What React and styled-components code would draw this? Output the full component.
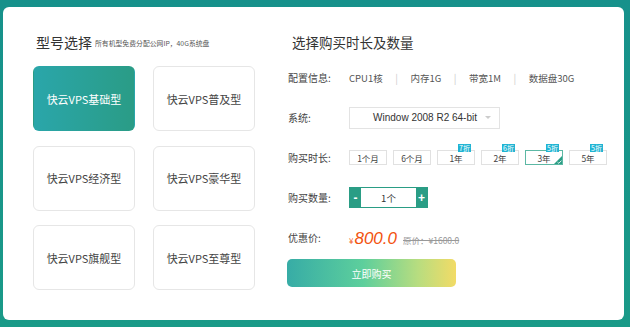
import React, { useState } from "react";
import styled, { createGlobalStyle, css } from "styled-components";

const Global = createGlobalStyle`
  html, body { margin: 0; padding: 0; }
  body {
    background: linear-gradient(180deg, #16918b 0%, #1a9a88 100%);
    font-family: "Noto Sans CJK SC", "Microsoft YaHei", sans-serif;
    width: 630px;
    height: 327px;
    overflow: hidden;
  }
`;

const Page = styled.div`
  padding: 7px 6px 7px 3px;
  box-sizing: border-box;
  height: 327px;
`;

const Card = styled.div`
  background: #fff;
  border-radius: 6px;
  height: 100%;
  box-sizing: border-box;
  padding: 25px 0 0 30px;
  display: flex;
  gap: 32px;
`;

const LeftCol = styled.div`
  width: 222px;
`;

const RightCol = styled.div`
  flex: 1;
`;

const TitleRow = styled.div`
  display: flex;
  align-items: center;
  height: 20px;
  gap: 3px;
  color: #333;
  padding-left: ${(p) => p.$indent || 3}px;
`;

const Title = styled.span`
  font-size: ${(p) => p.$size || 14}px;
  line-height: 20px;
`;

const Sub = styled.span`
  display: inline-block;
  font-size: 9px;
  color: #555;
  transform: scale(0.76);
  transform-origin: left center;
  white-space: nowrap;
  margin-top: 3px;
`;

const Grid = styled.div`
  margin-top: 14px;
  display: grid;
  grid-template-columns: 102px 102px;
  grid-auto-rows: 65px;
  column-gap: 18px;
  row-gap: 14.5px;
`;

const Model = styled.div`
  border: 1px solid #e6e6e6;
  border-radius: 6px;
  display: flex;
  align-items: center;
  justify-content: center;
  font-size: 11px;
  color: #444;
  ${(p) =>
    p.$active &&
    css`
      border-color: transparent;
      background: linear-gradient(90deg, #2aa6aa 0%, #2a9c86 100%);
      color: #fff;
    `}
`;

const Rows = styled.div`
  margin-top: 5.5px;
`;

const Row = styled.div`
  display: flex;
  align-items: center;
  height: 40px;
  font-size: 10px;
  color: #444;
`;

const Label = styled.div`
  width: 61px;
  flex: none;
  padding-left: 1px;
`;

const Spec = styled.span`
  color: #555;
  font-size: 9.5px;
`;

const Sep = styled.span`
  color: #ccc;
  margin: 0 12.5px;
  font-size: 10px;
`;

const Select = styled.div`
  width: 151px;
  height: 22px;
  box-sizing: border-box;
  border: 1px solid #e3e3e3;
  display: flex;
  align-items: center;
  justify-content: flex-end;
  padding-right: 8px;
  gap: 8px;
  font-family: "Liberation Sans", "Noto Sans CJK SC", sans-serif;
  font-size: 10px;
  color: #333;
`;

const Arrow = styled.span`
  width: 0;
  height: 0;
  border-left: 3.5px solid transparent;
  border-right: 3.5px solid transparent;
  border-top: 3.5px solid #ccc;
`;

const Terms = styled.div`
  display: flex;
  gap: 6px;
`;

const Term = styled.div`
  position: relative;
  width: 38px;
  height: 15px;
  box-sizing: border-box;
  border: 1px solid ${(p) => (p.$active ? "#5cb8a4" : "#e1e1e1")};
  display: flex;
  align-items: center;
  justify-content: center;
  font-size: 8.5px;
  color: #444;
  ${(p) =>
    p.$active &&
    css`
      &::after {
        content: "";
        position: absolute;
        right: 0;
        bottom: 0;
        width: 0;
        height: 0;
        border-left: 8px solid transparent;
        border-bottom: 8px solid #2a9d85;
      }
    `}
`;

const Check = styled.svg`
  position: absolute;
  right: 0;
  bottom: 0;
  z-index: 1;
`;

const Badge = styled.span`
  position: absolute;
  right: 3px;
  top: -7px;
  height: 8px;
  padding: 0 1px;
  background: #20b4d3;
  color: #fff;
  font-size: 7px;
  line-height: 8px;
  white-space: nowrap;
`;

const Stepper = styled.div`
  display: flex;
  height: 21px;
  width: 79px;
  box-sizing: border-box;
  border: 1px solid #2a9d85;
`;

const StepBtn = styled.div`
  width: 11px;
  background: #2a9d85;
  color: #fff;
  display: flex;
  align-items: center;
  justify-content: center;
  font-size: 12px;
  font-family: "Liberation Sans", sans-serif;
  font-weight: bold;
`;

const Qty = styled.div`
  flex: 1;
  display: flex;
  align-items: center;
  justify-content: center;
  font-size: 9.5px;
  color: #333;
`;

const PriceBox = styled.div`
  display: flex;
  align-items: baseline;
  padding-top: 2px;
`;

const Yen = styled.span`
  color: #f2581a;
  font-size: 8px;
  margin-right: 1px;
`;

const Price = styled.span`
  color: #f2530f;
  font-family: "Liberation Sans", sans-serif;
  font-style: italic;
  font-size: 17px;
`;

const Orig = styled.span`
  color: #999;
  font-size: 8.5px;
  text-decoration: line-through;
  margin-left: 6px;
`;

const BuyBtn = styled.button`
  display: block;
  margin-top: 1.5px;
  width: 169px;
  height: 28px;
  border: none;
  border-radius: 5px;
  background: linear-gradient(90deg, #37aca6 0%, #5dcf9c 45%, #b9dd7f 78%, #f2db66 100%);
  color: #fff;
  font-family: "Noto Sans CJK SC", sans-serif;
  font-size: 10px;
  cursor: pointer;
`;

const models = [
  "快云VPS基础型",
  "快云VPS普及型",
  "快云VPS经济型",
  "快云VPS豪华型",
  "快云VPS旗舰型",
  "快云VPS至尊型",
];

const terms = [
  { t: "1个月" },
  { t: "6个月" },
  { t: "1年", b: "7折" },
  { t: "2年", b: "6折" },
  { t: "3年", b: "5折" },
  { t: "5年", b: "5折" },
];

export default function App() {
  const [model, setModel] = useState(0);
  const [term, setTerm] = useState(4);

  return (
    <>
      <Global />
      <Page>
        <Card>
          <LeftCol>
            <TitleRow $indent={3}>
              <Title $size={14}>型号选择</Title>
              <Sub>所有机型免费分配公网IP，40G系统盘</Sub>
            </TitleRow>
            <Grid>
              {models.map((m, i) => (
                <Model key={m} $active={i === model} onClick={() => setModel(i)}>
                  {m}
                </Model>
              ))}
            </Grid>
          </LeftCol>
          <RightCol>
            <TitleRow $indent={5}>
              <Title $size={13.5}>选择购买时长及数量</Title>
            </TitleRow>
            <Rows>
              <Row>
                <Label>配置信息:</Label>
                <Spec>CPU1核</Spec>
                <Sep>|</Sep>
                <Spec>内存1G</Spec>
                <Sep>|</Sep>
                <Spec>带宽1M</Spec>
                <Sep>|</Sep>
                <Spec>数据盘30G</Spec>
              </Row>
              <Row>
                <Label>系统:</Label>
                <Select>
                  Window 2008 R2 64-bit
                  <Arrow />
                </Select>
              </Row>
              <Row>
                <Label>购买时长:</Label>
                <Terms>
                  {terms.map((x, i) => (
                    <Term key={x.t} $active={i === term} onClick={() => setTerm(i)}>
                      {x.t}
                      {x.b && <Badge>{x.b}</Badge>}
                      {i === term && (
                        <Check width="5" height="4" viewBox="0 0 5 4">
                          <path d="M0.5 2.2 L1.8 3.3 L4.5 0.6" fill="none" stroke="#fff" strokeWidth="0.9" />
                        </Check>
                      )}
                    </Term>
                  ))}
                </Terms>
              </Row>
              <Row>
                <Label>购买数量:</Label>
                <Stepper>
                  <StepBtn>-</StepBtn>
                  <Qty>1个</Qty>
                  <StepBtn>+</StepBtn>
                </Stepper>
              </Row>
              <Row>
                <Label>优惠价:</Label>
                <PriceBox>
                  <Yen>¥</Yen>
                  <Price>800.0</Price>
                  <Orig>原价：¥1600.0</Orig>
                </PriceBox>
              </Row>
            </Rows>
            <BuyBtn>立即购买</BuyBtn>
          </RightCol>
        </Card>
      </Page>
    </>
  );
}
